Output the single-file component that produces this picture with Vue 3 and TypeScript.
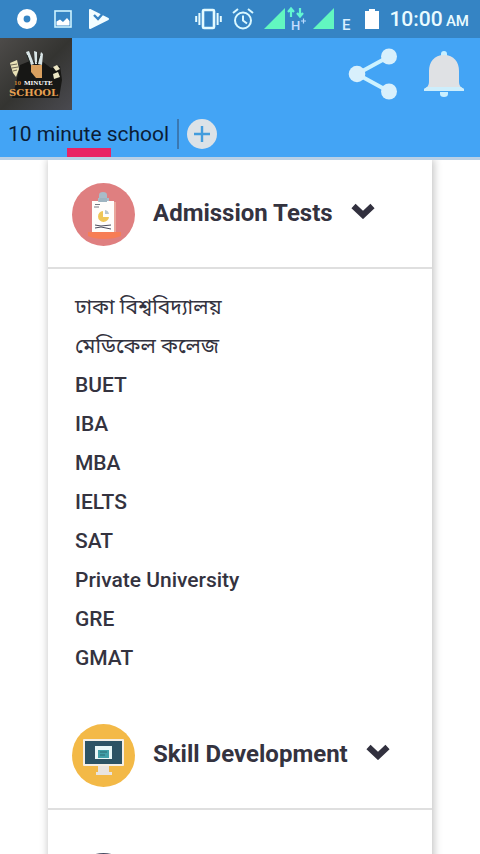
<script setup lang="ts">
import { ref } from 'vue'

interface Item {
  label: string
  lang: 'bn' | 'en'
}

interface Section {
  id: string
  title: string
  items: Item[]
}

const sections: Section[] = [
  {
    id: 'admission',
    title: 'Admission Tests',
    items: [
      { label: 'ঢাকা বিশ্ববিদ্যালয়', lang: 'bn' },
      { label: 'মেডিকেল কলেজ', lang: 'bn' },
      { label: 'BUET', lang: 'en' },
      { label: 'IBA', lang: 'en' },
      { label: 'MBA', lang: 'en' },
      { label: 'IELTS', lang: 'en' },
      { label: 'SAT', lang: 'en' },
      { label: 'Private University', lang: 'en' },
      { label: 'GRE', lang: 'en' },
      { label: 'GMAT', lang: 'en' },
    ],
  },
  {
    id: 'skill',
    title: 'Skill Development',
    items: [],
  },
  { id: 'more', title: '', items: [] },
]

const openId = ref('admission')

function toggle(id: string) {
  openId.value = openId.value === id ? '' : id
}
</script>

<template>
  <div class="screen">
    <div class="status">
      <div class="status-left">
        <svg width="20" height="20" viewBox="0 0 20 20">
          <circle cx="10" cy="10" r="6.7" fill="none" stroke="#fff" stroke-width="6.6" />
        </svg>
        <svg width="18" height="20" viewBox="0 0 18 20">
          <rect x="1" y="2" width="16" height="16" fill="none" stroke="#cdf3ff" stroke-width="1.6" />
          <path d="M2.500 16.500v-4l3.500-2 3 2.500 4-4 2.500 3v4.500z" fill="#fff" />
        </svg>
        <svg width="20" height="20" viewBox="0 0 20 20">
          <path d="M1 1v18l18-9z" fill="#f2fdff" stroke="#f2fdff" stroke-width="2" stroke-linejoin="round" />
          <path d="M5 6l4 4 7-8" fill="none" stroke="#3684c4" stroke-width="2.4" />
        </svg>
      </div>
      <div class="status-right">
        <svg width="27" height="22" viewBox="0 0 27 22">
          <rect x="8" y="2" width="11" height="18" rx="1" fill="none" stroke="#e4fbff" stroke-width="2.6" />
          <path d="M1.2 8v6M4.400 5v12M22.600 5v12M25.800 8v6" stroke="#e4fbff" stroke-width="2" />
        </svg>
        <svg width="22" height="22" viewBox="0 0 22 22" fill="none" stroke="#d9f8ff" stroke-width="2">
          <circle cx="11" cy="12.500" r="8" />
          <path d="M11 7.500v5l4 3M1 5l5-4M21 5l-5-4" />
        </svg>
        <svg class="signal" width="44" height="30" viewBox="0 0 44 30">
          <path d="M0 25L21 4v21z" fill="#62f7c0" />
          <path d="M27 13V5M24 8l3-3.500 3 3.500M36 4v8M33 9l3 3.500 3-3.500" fill="none" stroke="#62f7d2" stroke-width="2.200" />
          <text x="27" y="26" class="net">H</text>
          <path d="M37 17h5M39.500 14.500v5" stroke="#b9dcff" stroke-width="1.200" />
        </svg>
        <svg class="signal" width="40" height="30" viewBox="0 0 40 30">
          <path d="M0 25L21 4v21z" fill="#62f7c0" />
          <text x="29" y="26" class="net edge">E</text>
        </svg>
        <svg class="battery" width="14" height="22" viewBox="0 0 14 22">
          <path d="M0 3h4V1h6v2h4v18H0z" fill="#fff" />
        </svg>
        <time class="clock">10:00 <small>AM</small></time>
      </div>
    </div>

    <header class="appbar">
      <div class="brand-row">
        <svg class="logo" width="72" height="72" viewBox="0 0 72 72" role="img" aria-label="10 Minute School">
          <defs>
            <linearGradient id="board" x1="0" y1="0" x2="1" y2="1">
              <stop offset="0" stop-color="#4d4b49" />
              <stop offset="0.5" stop-color="#343431" />
              <stop offset="1" stop-color="#4a4a50" />
            </linearGradient>
          </defs>
          <rect width="72" height="72" fill="url(#board)" />
          <path d="M16 45l4-18 10-4 13 1 8 6 9-2 2 14-3 18H12z" fill="#171715" />
          <path d="M31 27h11v13h-6l-5-6z" fill="#d9a05f" />
          <path d="M31 27l-5-13 3-1 5 13zM35 26l-1-13 3 1v12zM38 26l3-12 2 2-1 11z" fill="#d9e5e6" />
          <path d="M30 25l-3-8M37 25l3-8" stroke="#202825" />
          <path d="M10 25l7-3 2 9-3 8-3-4z" fill="#e9e2b7" />
          <path d="M11 27l6-1M12 30l6-1M13 33l4-1" stroke="#6d6756" />
          <path d="M53 29l4-2 3 4-4 2zM53 36l5-2 2 5-6 2z" fill="#ece6c4" />
          <text x="14" y="47" class="logo-small" fill="#c98339">10</text>
          <text x="24" y="47" class="logo-small" fill="#fff">MINUTE</text>
          <text x="9" y="58" class="logo-large" fill="#e5a051">SCHOOL</text>
        </svg>
        <div class="actions">
          <button type="button" aria-label="Share">
            <svg width="50" height="52" viewBox="0 0 50 52">
              <path d="M41 8.500L9 26l32 17.500" fill="none" stroke="#cdf2ff" stroke-width="4" />
              <g fill="#d8f0fc">
                <circle cx="41" cy="8.500" r="8" />
                <circle cx="9" cy="26" r="8.300" />
                <circle cx="41" cy="43.500" r="8" />
              </g>
            </svg>
          </button>
          <button type="button" aria-label="Notifications">
            <svg width="40" height="46" viewBox="0 0 40 46">
              <path d="M17 6V3q0-3 3-3t3 3v3zM16 41h8v2q0 3-4 3t-4-3z" fill="#c9efff" />
              <path d="M20 4C10 4 5 11 5 20v10c0 4-1 6-5 8v2h40v-2c-4-2-5-4-5-8V20C35 11 30 4 20 4z" fill="#dfe1e4" />
              <path d="M3 36L0 38v2h40v-2l-3-2z" fill="#cdeefc" />
            </svg>
          </button>
        </div>
      </div>
      <div class="tabs">
        <button type="button" class="tab">10 minute school</button>
        <button type="button" class="add" aria-label="Add tab">
          <svg width="30" height="30" viewBox="0 0 30 30">
            <circle cx="15" cy="15" r="15" fill="#dce2e7" />
            <path d="M15 7v16M7 15h16" stroke="#429cdd" stroke-width="2.400" />
          </svg>
        </button>
      </div>
    </header>

    <main class="page">
      <div class="card">
        <section v-for="section in sections" :key="section.id" class="section">
          <button
            type="button"
            class="section-head"
            :aria-expanded="openId === section.id"
            @click="toggle(section.id)"
          >
            <svg v-if="section.id === 'admission'" width="63" height="63" viewBox="0 0 63 63">
              <circle cx="31.500" cy="31.500" r="31.500" fill="#df7f80" />
              <path d="M16 49h33v4q-7 3-17 3t-16-3z" fill="#f77d55" />
              <path d="M27 12q0-3 4-3t4 3v3h2v5H26v-5h1z" fill="#a9bcc8" />
              <rect x="20" y="18" width="22" height="31" fill="#fffdfb" />
              <path d="M42 19h2v30h-2z" fill="#e9a79c" />
              <path d="M28 15h7v4h-9z" fill="#9fb4c0" />
              <path d="M22 24h5M23 21.500h5" stroke="#767983" />
              <path d="M31 28a5.500 5.500 0 1 0 6 6h-6z" fill="#efc657" />
              <path d="M33 27a5 5 0 0 1 4 4h-4z" fill="#b8c6ce" />
              <path d="M23 42l6 1 10-1M23 45l6-1 10 2" fill="none" stroke="#4a4c5d" />
            </svg>
            <svg v-else-if="section.id === 'skill'" width="63" height="63" viewBox="0 0 63 63">
              <circle cx="31.500" cy="31.500" r="31.500" fill="#f3b947" />
              <path d="M26 41h11v7h3v3H24v-3h2z" fill="#e9e4e0" />
              <rect x="11" y="15" width="41" height="27" rx="1" fill="#f5eee4" />
              <rect x="13" y="17" width="37" height="23" fill="#2d5364" />
              <rect x="23" y="22" width="17" height="13" fill="#eaf7f7" />
              <path d="M26 26h11v8H26z" fill="#41a0aa" />
              <path d="M28 28h7M28 31h5" stroke="#2d6873" />
            </svg>
            <svg v-else width="63" height="63" viewBox="0 0 63 63">
              <circle cx="31.500" cy="31.500" r="31.500" fill="#454b60" />
            </svg>
            <span class="section-title">{{ section.title }}</span>
            <svg class="chevron" width="24" height="16" viewBox="0 0 24 16">
              <path d="M2.500 3l9.500 9 9.500-9" fill="none" stroke="#32313f" stroke-width="6" />
            </svg>
          </button>
          <ul v-if="openId === section.id" class="items">
            <li v-for="item in section.items" :key="item.label" :lang="item.lang">
              <a href="#">{{ item.label }}</a>
            </li>
          </ul>
        </section>
      </div>
    </main>
  </div>
</template>

<style>
body {
  background: #fff;
}
</style>

<style scoped>
.screen {
  display: flex;
  flex-direction: column;
  height: 100vh;
  overflow: hidden;
  font-family: Roboto, "Noto Sans Bengali", "Noto Sans", sans-serif;
  color: #34333f;
}
svg {
  display: block;
  flex: none;
}
button {
  margin: 0;
  padding: 0;
  border: 0;
  background: none;
  font: inherit;
  color: inherit;
  cursor: pointer;
}
.status {
  display: flex;
  flex: none;
  justify-content: space-between;
  align-items: center;
  height: 38px;
  padding: 0 11px 0 17px;
  background: #3584c4;
}
.status-left {
  display: flex;
  gap: 17px;
}
.status-right {
  display: flex;
  align-items: center;
  gap: 10px;
}
.signal + .signal {
  margin-left: -5px;
}
.battery {
  margin-left: 2px;
}
.net {
  font: 500 13px Roboto, sans-serif;
  fill: #c5dcff;
}
.edge {
  font-size: 15px;
  fill: #d9f0ff;
}
.clock {
  font-size: 21px;
  font-weight: 500;
  color: #e9fbff;
  white-space: nowrap;
}
.clock small {
  margin-left: -2px;
  font-size: 15px;
}
.appbar {
  flex: none;
  background: #43a4f5;
  border-bottom: 3px solid #b9d0e6;
}
.brand-row {
  display: flex;
  justify-content: space-between;
}
.logo-small {
  font: bold 7px "Liberation Serif", serif;
}
.logo-large {
  font: bold 10px "DejaVu Serif", serif;
}
.actions {
  display: flex;
  align-items: center;
  gap: 26px;
  padding-right: 16px;
}
.tabs {
  display: flex;
  align-items: center;
  height: 47px;
}
.tab {
  position: relative;
  height: 100%;
  padding: 0 8px;
  font-size: 21px;
  color: #0b1c35;
}
.tab::after {
  content: "";
  position: absolute;
  bottom: 0;
  left: 50%;
  width: 44px;
  height: 9px;
  margin-left: -22px;
  background: #e92264;
}
.add {
  padding-left: 8px;
  border-left: 2px solid #3b78b1;
}
.page {
  flex: 1;
  min-height: 0;
  padding: 0 48px;
  overflow: hidden auto;
  scrollbar-width: none;
}
.card {
  min-height: 100%;
  background: #fff;
  box-shadow: 1px 0 8px 1px rgba(0, 0, 0, 0.24);
}
.section {
  padding-bottom: 20px;
}
.section-head {
  display: flex;
  align-items: center;
  width: 100%;
  padding: 23px 24px 21px;
  border-bottom: 2px solid #dfdfdf;
  text-align: left;
}
.section-title {
  margin: 0 18px;
  padding-bottom: 4px;
  font-size: 24px;
  font-weight: 700;
  line-height: 32px;
  white-space: nowrap;
}
.chevron {
  margin-bottom: 8px;
}
.items {
  margin: 0;
  padding: 19px 27px 3px;
  list-style: none;
}
.items li {
  height: 39px;
  font-size: 21px;
  font-weight: 500;
  line-height: 39px;
}
.items li:lang(bn) {
  font-weight: 400;
}
.items a {
  display: block;
  color: inherit;
  text-decoration: none;
}
</style>
